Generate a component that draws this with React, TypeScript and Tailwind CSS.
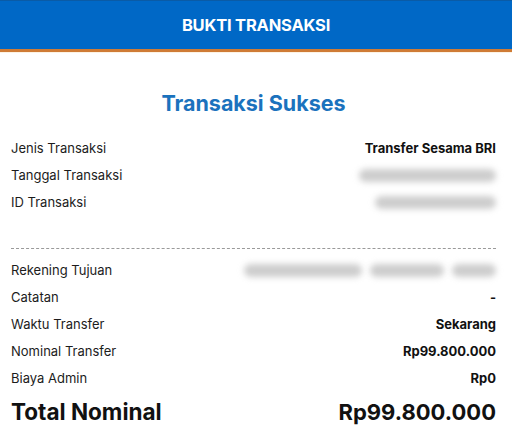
import React from 'react';

type Row = { label: string; value?: string; blur?: number[] };

const topRows: Row[] = [
  { label: 'Jenis Transaksi', value: 'Transfer Sesama BRI' },
  { label: 'Tanggal Transaksi', blur: [137] },
  { label: 'ID Transaksi', blur: [121] },
];

const bottomRows: Row[] = [
  { label: 'Rekening Tujuan', blur: [118, 74, 44] },
  { label: 'Catatan', value: '-' },
  { label: 'Waktu Transfer', value: 'Sekarang' },
  { label: 'Nominal Transfer', value: 'Rp99.800.000' },
  { label: 'Biaya Admin', value: 'Rp0' },
];

const DetailRow = ({ label, value, blur }: Row) => (
  <div className="flex items-center justify-between h-[27px]">
    <span className="text-[13px] text-[#1c1c1c]">{label}</span>
    {value && <span className="text-[13px] font-bold text-[#111]">{value}</span>}
    {blur && (
      <div className="flex gap-[8px]">
        {blur.map((w, i) => (
          <div key={i} className="h-[13px] rounded-full bg-[#cdcdcd] blur-[3px]" style={{ width: w }} />
        ))}
      </div>
    )}
  </div>
);

export default function App() {
  return (
    <div className="w-[512px] h-[433px] bg-white overflow-hidden font-['Inter',sans-serif]">
      <div className="h-[49px] bg-[#0068c6] border-t border-[#0a5ba6] flex items-center justify-center">
        <span className="text-white font-bold text-[16.5px] tracking-[-0.2px]">BUKTI TRANSAKSI</span>
      </div>
      <div className="h-[3px] bg-[#cf7b35]" />
      <div className="h-[1px] bg-[#fdf3e4]" />
      <div className="px-[11px] pr-[16px]">
        <h1 className="text-center text-[#1b72bd] font-bold text-[21.5px] mt-[34px] mb-[16px]">Transaksi Sukses</h1>
        {topRows.map(r => (
          <DetailRow key={r.label} {...r} />
        ))}
        <div className="h-[32px]" />
        <div className="border-t border-dashed border-[#9a9a9a]" />
        <div className="h-[8px]" />
        {bottomRows.map(r => (
          <DetailRow key={r.label} {...r} />
        ))}
        <div className="flex items-center justify-between mt-[3px]">
          <span className="text-[22.5px] font-bold text-[#111]">Total Nominal</span>
          <span className="text-[22px] font-bold text-[#111]">Rp99.800.000</span>
        </div>
      </div>
    </div>
  );
}
